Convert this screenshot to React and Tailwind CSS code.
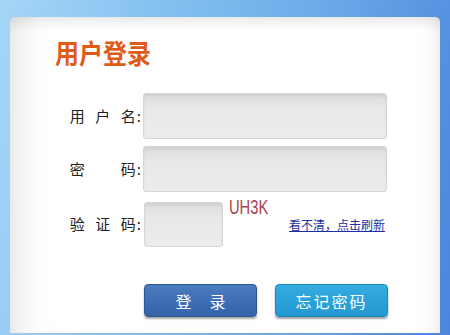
export default function App() {
  const font = { fontFamily: '"Noto Sans CJK SC", "Noto Sans", sans-serif' };
  const inputCls =
    "rounded-[3px] border border-[#d6d6d6] bg-[linear-gradient(#dcdcdc,#e9e9e9_35%,#ececec)] shadow-[inset_0_2px_3px_rgba(0,0,0,0.06)]";

  const Label = ({ chars }) => (
    <div className="w-[133px] pr-[2px] flex justify-end items-center text-[15px] text-[#222]">
      <div className="w-[66px] flex justify-between">
        {chars.map((c, i) => (
          <span key={i}>{c}</span>
        ))}
      </div>
      <span className="ml-[1px]">:</span>
    </div>
  );

  return (
    <div
      className="w-[450px] h-[335px] overflow-hidden bg-[linear-gradient(100deg,#a6d6f8_0%,#86c2f0_30%,#6aa9e8_65%,#4a86dc_100%)] pl-[10px] pr-[10px] pt-[17px]"
      style={font}
    >
      <div className="h-[316px] rounded-t-[5px] bg-white shadow-[inset_0_12px_14px_-8px_rgba(0,0,0,0.10),inset_28px_0_30px_-18px_rgba(0,0,0,0.10),inset_-18px_0_20px_-14px_rgba(0,0,0,0.08)] pt-[20px]">
        <h1 className="ml-[45px] text-[24px] leading-[31px] font-bold text-[#df5b17] origin-left scale-y-[1.12]">
          用户登录
        </h1>

        <div className="mt-[25px] flex flex-col">
          <div className="flex items-center">
            <Label chars={["用", "户", "名"]} />
            <div className={`w-[244px] h-[46px] ${inputCls}`}></div>
          </div>

          <div className="mt-[7px] flex items-center">
            <Label chars={["密", "码"]} />
            <div className={`w-[244px] h-[46px] ${inputCls}`}></div>
          </div>

          <div className="mt-[10px] flex items-center">
            <Label chars={["验", "证", "码"]} />
            <div className={`ml-[1px] w-[79px] h-[45px] ${inputCls}`}></div>
            <div
              className="self-start -mt-[7px] ml-[6px] w-[40px] text-[21px] leading-[24px] text-[#a8424e]"
              style={{ fontFamily: '"Liberation Sans", Arial, sans-serif' }}
            >
              <span className="inline-block origin-left scale-x-[0.7]">UH3K</span>
            </div>
            <a className="self-end mb-[15px] ml-[20px] text-[12px] leading-[14px] text-[#1c2fa0] underline">
              看不清，点击刷新
            </a>
          </div>

          <div className="mt-[37px] ml-[134px] flex gap-[18px]">
            <button className="w-[113px] h-[33px] rounded-[4px] bg-[linear-gradient(#4a7cc0,#3463a8)] border border-[#2d5590] shadow-[0_2px_2px_rgba(0,0,0,0.35)] text-white text-[16px] tracking-[18px] pl-[18px]">
              登录
            </button>
            <button className="w-[113px] h-[33px] rounded-[4px] bg-[linear-gradient(#34abe0,#2398d2)] border border-[#1f86bb] shadow-[0_2px_2px_rgba(0,0,0,0.35)] text-white text-[16px] tracking-[2px]">
              忘记密码
            </button>
          </div>
        </div>
      </div>
    </div>
  );
}
